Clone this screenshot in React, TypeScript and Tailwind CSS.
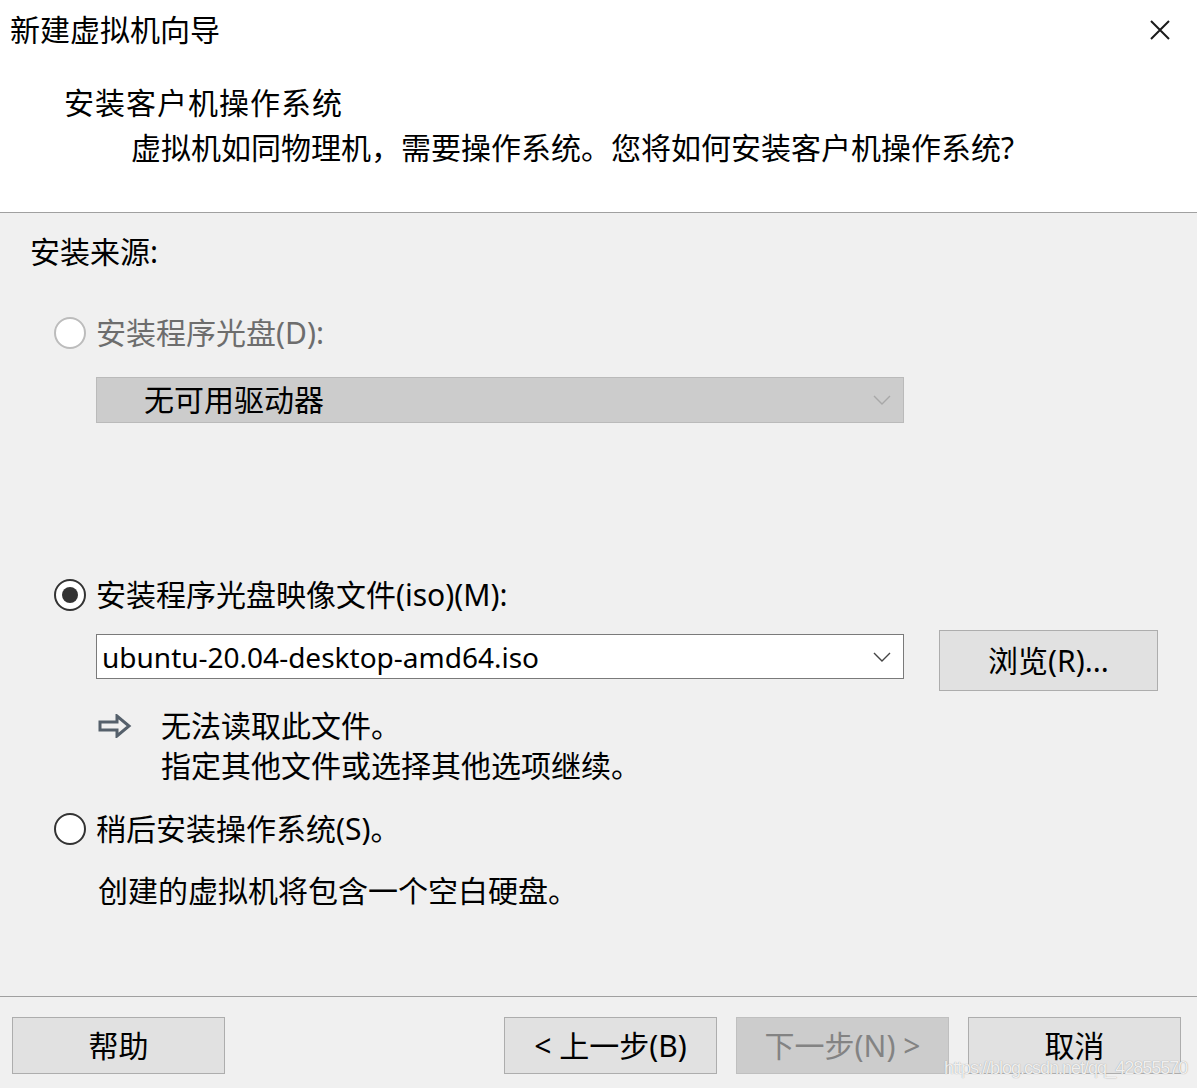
import React from 'react';

const FONT = "font-['Noto_Sans','Noto_Sans_CJK_SC',sans-serif]";

const Radio: React.FC<{ checked?: boolean; disabled?: boolean }> = ({ checked, disabled }) => (
  <span
    className={`w-[32px] h-[32px] rounded-full border-2 bg-white flex items-center justify-center shrink-0 ${
      disabled ? 'border-[#bcbcbc]' : 'border-[#333333]'
    }`}
  >
    {checked && <span className="w-[16px] h-[16px] rounded-full bg-[#333333]" />}
  </span>
);

const Chevron: React.FC<{ color: string }> = ({ color }) => (
  <svg width="18" height="10" viewBox="0 0 18 10" className="shrink-0">
    <path d="M1 1 L9 9 L17 1" fill="none" stroke={color} strokeWidth="1.4" />
  </svg>
);

const Button: React.FC<{ label: React.ReactNode; disabled?: boolean; className?: string }> = ({ label, disabled, className }) => (
  <button
    className={`h-[57px] w-[213px] border text-[30px] leading-none flex items-center justify-center ${
      disabled ? 'bg-[#cccccc] border-[#bfbfbf] text-[#838383]' : 'bg-[#e1e1e1] border-[#adadad] text-black'
    } ${className ?? ''}`}
  >
    {label}
  </button>
);

export default function App() {
  return (
    <div className={`relative w-[1197px] h-[1088px] bg-[#f0f0f0] text-black overflow-hidden ${FONT}`}>
      {/* header */}
      <div className="h-[213px] bg-white border-b border-[#a0a0a0] flex flex-col">
        <div className="flex items-center justify-between mt-[10px] pl-[10px] pr-[26px] h-[40px]">
          <span className="text-[30px] leading-[40px]">新建虚拟机向导</span>
          <svg width="22" height="22" viewBox="0 0 22 22">
            <path d="M2 2 L20 20 M20 2 L2 20" stroke="#1a1a1a" strokeWidth="2" />
          </svg>
        </div>
        <div className="mt-[33px] pl-[64px] text-[30px] leading-[40px] tracking-[1px]">安装客户机操作系统</div>
        <div className="mt-[5px] pl-[131px] text-[30px] leading-[40px]">
          虚拟机如同物理机，需要操作系统。您将如何安装客户机操作系统?
        </div>
      </div>

      {/* body */}
      <div className="h-[783px] flex flex-col">
        <div className="mt-[19px] pl-[30px] text-[30px] leading-[40px]">安装来源:</div>

        <div className="mt-[41px] pl-[54px] flex items-center gap-[10px] h-[40px]">
          <Radio disabled />
          <span className="text-[30px] leading-[40px] text-[#6d6d6d]">安装程序光盘(D):</span>
        </div>
        <div className="mt-[24px] ml-[96px] w-[808px] h-[46px] bg-[#cccccc] border border-[#bababa] flex items-center justify-between pl-[47px] pr-[12px]">
          <span className="text-[30px] leading-[40px]">无可用驱动器</span>
          <Chevron color="#a8a8a8" />
        </div>

        <div className="mt-[152px] pl-[54px] flex items-center gap-[10px] h-[40px]">
          <Radio checked />
          <span className="text-[30px] leading-[40px]">安装程序光盘映像文件(iso)(M):</span>
        </div>
        <div className="mt-[15px] ml-[96px] flex items-start gap-[35px]">
          <div className="mt-[4px] w-[808px] h-[45px] bg-white border border-[#7a7a7a] flex items-center justify-between pl-[5px] pr-[12px]">
            <span className="text-[28px] leading-[40px]">ubuntu-20.04-desktop-amd64.iso</span>
            <Chevron color="#444444" />
          </div>
          <button className="w-[219px] h-[61px] bg-[#e1e1e1] border border-[#adadad] text-[30px] leading-none flex items-center justify-center">
            浏览(R)...
          </button>
        </div>

        <div className="mt-[15px] ml-[98px] flex items-start">
          <svg width="34" height="24" viewBox="0 0 34 24" className="mt-[8px] shrink-0">
            <path d="M2 8 H19 V2 L31 12 L19 22 V16 H2 Z" fill="none" stroke="#55606b" strokeWidth="3" strokeLinejoin="miter" />
          </svg>
          <div className="ml-[29px] flex flex-col text-[30px] leading-[40px]">
            <span>无法读取此文件。</span>
            <span>指定其他文件或选择其他选项继续。</span>
          </div>
        </div>

        <div className="mt-[23px] pl-[54px] flex items-center gap-[10px] h-[40px]">
          <Radio />
          <span className="text-[30px] leading-[40px]">稍后安装操作系统(S)。</span>
        </div>
        <div className="mt-[22px] pl-[98px] text-[30px] leading-[40px]">创建的虚拟机将包含一个空白硬盘。</div>
      </div>

      {/* footer */}
      <div className="border-t border-[#a0a0a0] pt-[20px] px-[12px] flex items-start">
        <Button label="帮助" />
        <div className="flex-1" />
        <div className="flex gap-[19px] pr-[4px]">
          <Button label="< 上一步(B)" />
          <Button label="下一步(N) >" disabled />
          <Button label="取消" />
        </div>
      </div>

      <span className="absolute left-[944px] top-[1057px] text-[18px] leading-[22px] tracking-[-1px] text-white/85 font-['Liberation_Sans',sans-serif] [text-shadow:0_0_1px_#8a8a8a] whitespace-nowrap">
        https://blog.csdn.net/qq_42855570
      </span>
    </div>
  );
}
